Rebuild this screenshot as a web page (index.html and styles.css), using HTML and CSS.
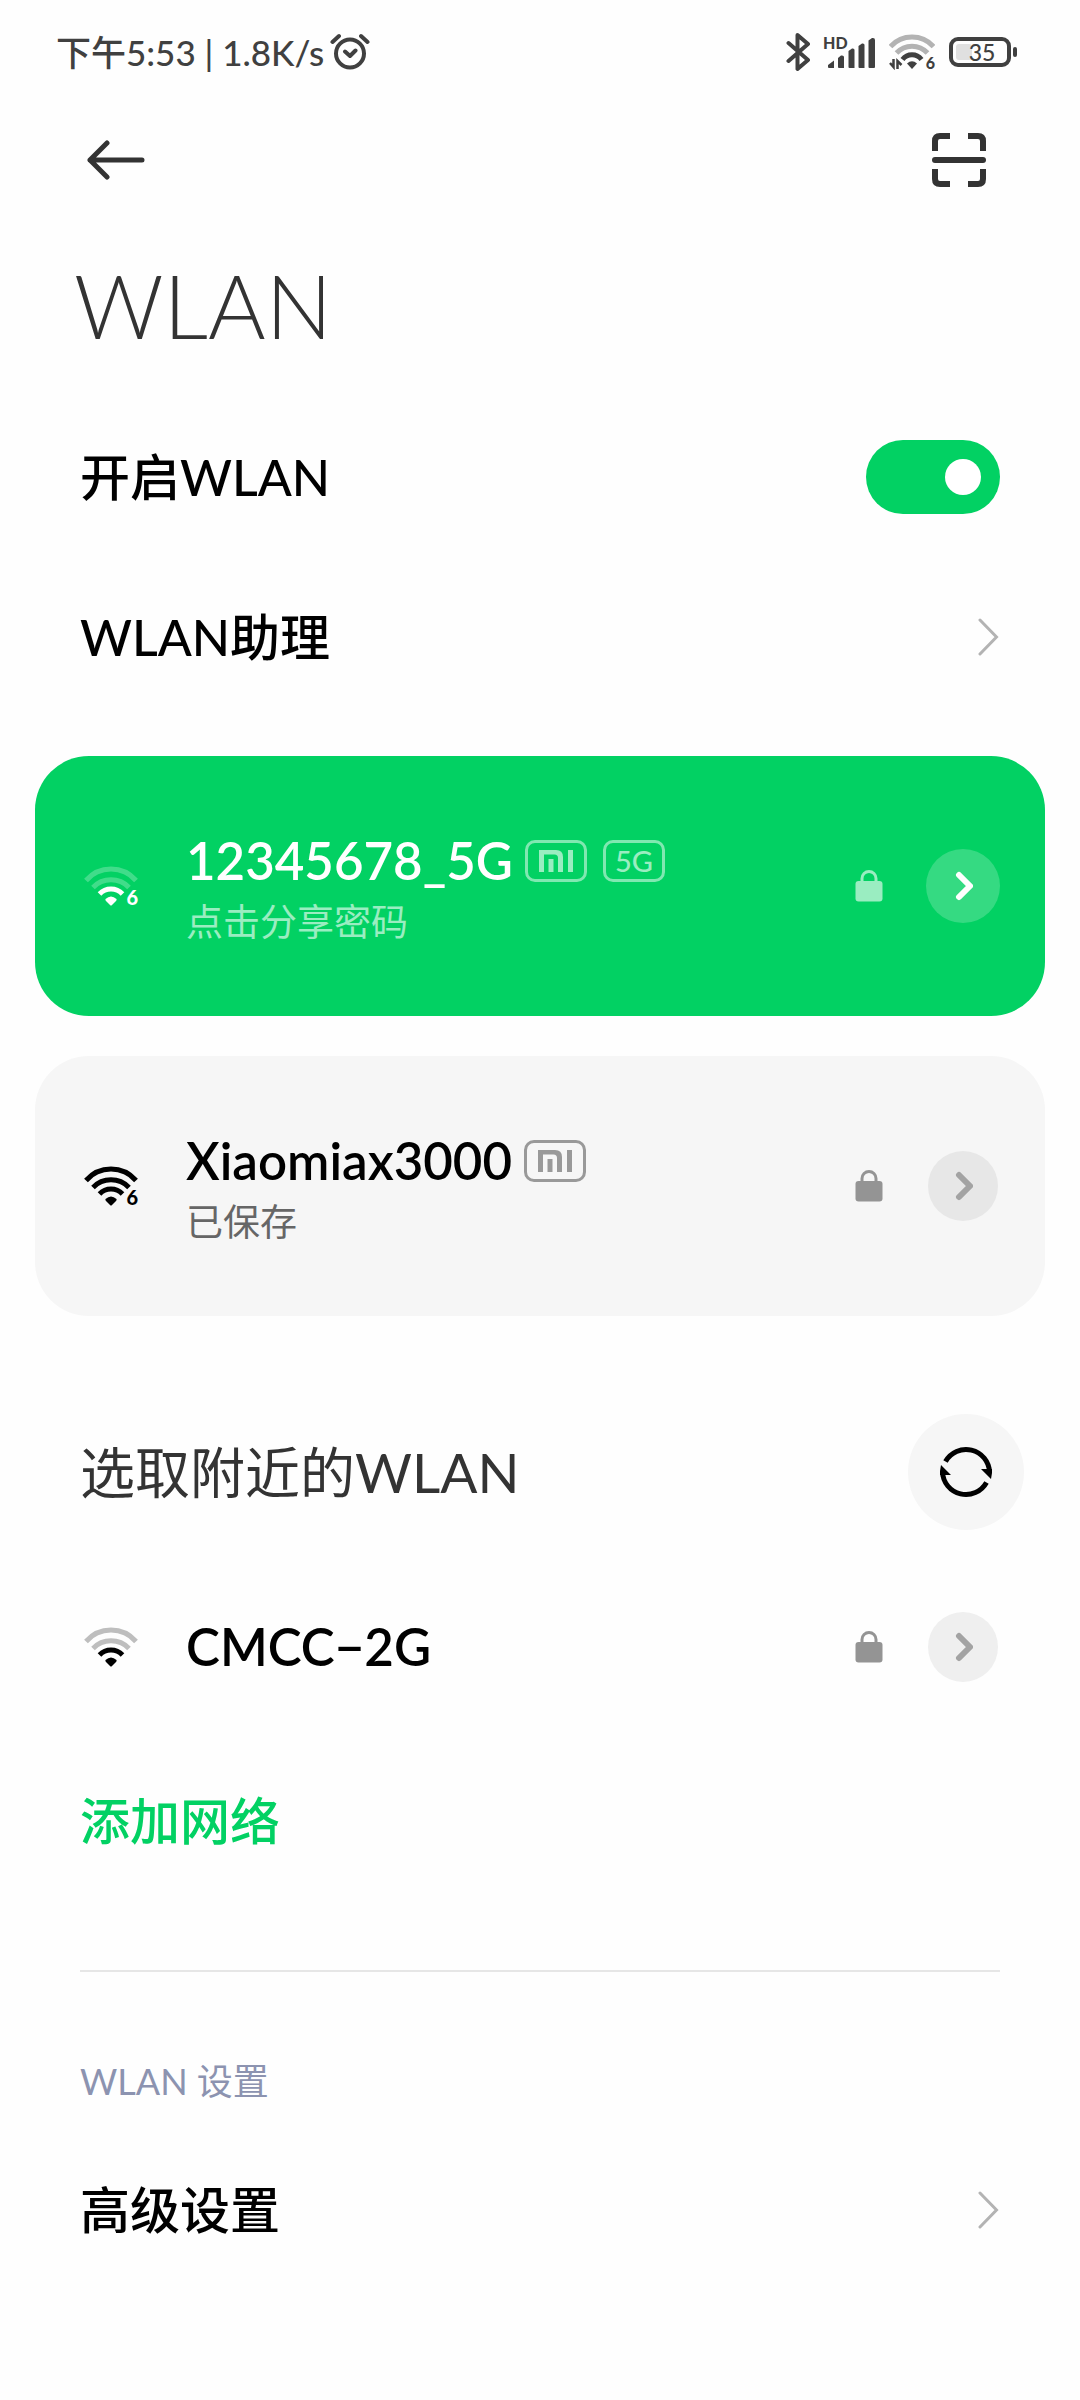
FILE: index.html
```html
<!DOCTYPE html>
<html lang="zh-CN">
<head>
    <meta charset="UTF-8">
    <meta name="viewport" content="width=device-width, initial-scale=1.0">
    <title>WLAN</title>
    <link rel="stylesheet" href="styles.css">
</head>
<body>
    <!-- 共用图标 -->
    <svg class="sprite" aria-hidden="true">
        <symbol id="icon-wifi" viewBox="0 0 54 40">
            <g fill="none" stroke="currentColor" stroke-width="5">
                <path class="wifi-far" d="M2 14.5A33 33 0 0 1 52 14.5"/>
                <path class="wifi-mid" d="M9 21.5A25 25 0 0 1 45 21.5"/>
                <path d="M15.500 28A16 16 0 0 1 38.500 28"/>
            </g>
            <path fill="currentColor" d="M21.500 33Q27 28 32.500 33Q33 34 32 35L28 39Q27 40 26 39L22 35Q21 34 21.500 33Z"/>
        </symbol>
        <symbol id="icon-lock" viewBox="0 0 28 32">
            <path fill="none" stroke="currentColor" stroke-width="3" d="M7 12V8.500a7 7 0 0 1 14 0V12"/>
            <rect fill="currentColor" x="0.500" y="11" width="27" height="20.500" rx="3"/>
        </symbol>
        <symbol id="icon-go" viewBox="0 0 20 30">
            <path fill="none" stroke="currentColor" stroke-width="6" stroke-linecap="round" stroke-linejoin="round" d="M6 4L17 15L6 26"/>
        </symbol>
        <symbol id="icon-chevron" viewBox="0 0 22 40">
            <path fill="none" stroke="currentColor" stroke-width="3" stroke-linecap="round" d="M2 3L18.500 20L2 37"/>
        </symbol>
        <symbol id="icon-mi" viewBox="0 0 34 22">
            <path fill="currentColor" d="M0 0H17Q24 0 24 7V22H19V8Q19 4.500 15.500 4.500H5V22H0Z"/>
            <rect fill="currentColor" x="9.500" y="9" width="5" height="13"/>
            <rect fill="currentColor" x="29" y="0" width="5" height="22"/>
        </symbol>
    </svg>

    <div class="status-bar">
        <div class="status-left">
            <span>下午5:53 | 1.8K/s</span>
            <svg class="alarm" viewBox="0 0 40 38" fill="none" stroke="currentColor" stroke-width="4" stroke-linecap="round" stroke-linejoin="round">
                <circle cx="20" cy="20.500" r="14"/>
                <path d="M15 18.500L20 23L25.500 17.500M2.500 9L9 3M37.500 9L31 3"/>
            </svg>
        </div>
        <div class="status-right">
            <svg class="bluetooth" viewBox="0 0 25 40" fill="none" stroke="currentColor" stroke-width="4" stroke-linecap="round" stroke-linejoin="round">
                <path d="M2.500 11L22 28L11.500 37V3L22 12L2.500 29"/>
            </svg>
            <div class="signal">
                <svg viewBox="0 0 50 34" fill="currentColor">
                    <path d="M3 30L9 25.500V33H4Q3 33 3 32Z"/>
                    <path d="M13 23L16 20.500Q19 20 19 22V33H14Q13 33 13 32Z"/>
                    <path d="M23.500 16L27 13.500Q29.500 13 29.500 15V33H24.500Q23.500 33 23.500 32Z"/>
                    <path d="M33.500 11L37 8.500Q39.500 8 39.500 10V33H34.500Q33.500 33 33.500 32Z"/>
                    <path d="M43.500 5.500L47 3Q50 2.500 50 5V32Q50 33 49 33H44.500Q43.500 33 43.500 32Z"/>
                </svg>
                <span class="signal-hd">HD</span>
            </div>
            <div class="status-wifi">
                <svg viewBox="0 0 46 36">
                    <g fill="none" stroke-width="5">
                        <path stroke="#b3b3b3" d="M1.500 12.500A29 29 0 0 1 44.500 12.500"/>
                        <path stroke="#b3b3b3" d="M7.500 19A21 21 0 0 1 38.500 19"/>
                        <path stroke="currentColor" d="M13.500 25.500A12 12 0 0 1 32.500 25.500"/>
                    </g>
                    <path fill="currentColor" d="M18 29.500Q23 25 28 29.500L23 35Z"/>
                    <path fill="none" stroke="currentColor" stroke-width="2.500" d="M1 29L4.500 33V25M8.500 35V27L12.500 31"/>
                </svg>
                <span class="wifi-gen">6</span>
            </div>
            <div class="battery">
                <span class="battery-level"></span>
                <span class="battery-text">35</span>
            </div>
        </div>
    </div>

    <header class="nav">
        <button class="icon-button" aria-label="返回">
            <svg class="back-icon" viewBox="0 0 58 40" fill="none" stroke="currentColor" stroke-width="5" stroke-linecap="round" stroke-linejoin="round">
                <path d="M55 20H3M20 3L3 20L20 37"/>
            </svg>
        </button>
        <button class="icon-button" aria-label="扫一扫">
            <svg class="scan-icon" viewBox="0 0 54 54" fill="none" stroke="currentColor" stroke-width="6">
                <path d="M3 18V8Q3 3 8 3H18M36 3H46Q51 3 51 8V18M51 36V46Q51 51 46 51H36M18 51H8Q3 51 3 46V36"/>
                <path stroke-linecap="round" d="M3 27H51"/>
            </svg>
        </button>
    </header>

    <main>
        <h1 class="title">WLAN</h1>

        <div class="row">
            <label for="wlan-switch">开启WLAN</label>
            <input class="switch" type="checkbox" id="wlan-switch" checked>
        </div>
        <a class="row" href="#">
            <span>WLAN助理</span>
            <svg class="chevron"><use href="#icon-chevron"/></svg>
        </a>

        <section class="cards">
            <div class="network card connected">
                <div class="wifi-icon weak">
                    <svg><use href="#icon-wifi"/></svg>
                    <span class="wifi-gen">6</span>
                </div>
                <div class="network-text">
                    <div class="network-name">
                        <span>12345678_5G</span>
                        <span class="badges">
                            <span class="badge"><svg><use href="#icon-mi"/></svg></span>
                            <span class="badge">5G</span>
                        </span>
                    </div>
                    <div class="network-note">点击分享密码</div>
                </div>
                <svg class="lock"><use href="#icon-lock"/></svg>
                <button class="go" aria-label="12345678_5G 详情"><svg><use href="#icon-go"/></svg></button>
            </div>

            <div class="network card saved">
                <div class="wifi-icon">
                    <svg><use href="#icon-wifi"/></svg>
                    <span class="wifi-gen">6</span>
                </div>
                <div class="network-text">
                    <div class="network-name">
                        <span>Xiaomiax3000</span>
                        <span class="badges">
                            <span class="badge"><svg><use href="#icon-mi"/></svg></span>
                        </span>
                    </div>
                    <div class="network-note">已保存</div>
                </div>
                <svg class="lock"><use href="#icon-lock"/></svg>
                <button class="go" aria-label="Xiaomiax3000 详情"><svg><use href="#icon-go"/></svg></button>
            </div>
        </section>

        <section>
            <div class="section-head">
                <h2>选取附近的WLAN</h2>
                <button class="refresh" aria-label="刷新">
                    <svg viewBox="0 0 54 54">
                        <g fill="none" stroke="currentColor" stroke-width="5">
                            <path d="M6.500 16.500A23.500 23.500 0 0 1 50.500 27"/>
                            <path d="M47.500 37.500A23.500 23.500 0 0 1 3.500 27"/>
                        </g>
                        <path fill="currentColor" d="M42 24H53V28L52 34ZM12 30H1V26L2 20Z"/>
                    </svg>
                </button>
            </div>
            <div class="network nearby">
                <div class="wifi-icon weak">
                    <svg><use href="#icon-wifi"/></svg>
                </div>
                <div class="network-text">
                    <div class="network-name">CMCC−2G</div>
                </div>
                <svg class="lock"><use href="#icon-lock"/></svg>
                <button class="go" aria-label="CMCC-2G 详情"><svg><use href="#icon-go"/></svg></button>
            </div>
            <a class="row add-network" href="#">添加网络</a>
        </section>

        <section class="settings">
            <h3>WLAN 设置</h3>
            <a class="row" href="#">
                <span>高级设置</span>
                <svg class="chevron"><use href="#icon-chevron"/></svg>
            </a>
        </section>
    </main>
</body>
</html>
```
FILE: styles.css
```css
* {
    box-sizing: border-box;
}
body {
    margin: 0;
    background-color: #fefefe;
    color: #000;
    font-family: Lato, "Noto Sans CJK SC", sans-serif;
    font-size: 50px;
    font-weight: 500;
    line-height: 60px;
}
a {
    color: inherit;
    text-decoration: none;
}
button {
    border: none;
    padding: 0;
    background: none;
    color: inherit;
    cursor: pointer;
}
svg {
    display: block;
    flex-shrink: 0;
}
h1, h2, h3 {
    margin: 0;
}
.sprite {
    position: absolute;
    width: 0;
    height: 0;
}

/* 状态栏 */
.status-bar {
    display: flex;
    justify-content: space-between;
    align-items: center;
    height: 104px;
    padding: 0 63px 0 56px;
    color: #404040;
    font-size: 35px;
}
.status-left {
    display: flex;
    align-items: center;
    gap: 6px;
}
.status-right {
    display: flex;
    align-items: center;
    gap: 14px;
}
.alarm {
    width: 40px;
    height: 38px;
}
.bluetooth {
    width: 25px;
    height: 40px;
}
.signal {
    position: relative;
}
.signal svg {
    width: 50px;
    height: 34px;
}
.signal-hd {
    position: absolute;
    left: -2px;
    top: -2px;
    font-size: 16px;
    font-weight: 900;
    line-height: 20px;
}
.status-wifi {
    position: relative;
}
.status-wifi svg {
    width: 46px;
    height: 36px;
}
.battery {
    position: relative;
    display: flex;
    align-items: center;
    justify-content: center;
    width: 62px;
    height: 30px;
    margin-right: 6px;
    border: 4px solid #404040;
    border-radius: 9px;
    font-size: 23px;
    line-height: 22px;
}
.battery::after {
    content: "";
    position: absolute;
    right: -10px;
    top: 6px;
    width: 4px;
    height: 10px;
    border-radius: 2px;
    background-color: #404040;
}
.battery-level {
    position: absolute;
    left: 3px;
    top: 3px;
    width: 16px;
    height: 16px;
    border-radius: 3px;
    background-color: #e0e0e0;
}
.battery-text {
    position: relative;
    padding-left: 4px;
}

/* 顶部导航 */
.nav {
    display: flex;
    justify-content: space-between;
    align-items: center;
    height: 112px;
    padding: 0 94px 0 87px;
    color: #333;
}
.back-icon {
    width: 58px;
    height: 40px;
}
.scan-icon {
    width: 54px;
    height: 54px;
}
.title {
    padding: 39px 74px 42px;
    color: #333;
    font-size: 88px;
    font-weight: 300;
    line-height: 100px;
}

/* 设置行 */
.row {
    display: flex;
    justify-content: space-between;
    align-items: center;
    height: 160px;
    padding: 0 80px;
}
.switch {
    appearance: none;
    display: flex;
    align-items: center;
    justify-content: flex-end;
    width: 134px;
    height: 74px;
    margin: 0;
    padding: 0 19px;
    border-radius: 37px;
    background-color: #ccc;
    cursor: pointer;
}
.switch::before {
    content: "";
    width: 36px;
    height: 36px;
    border-radius: 50%;
    background-color: #fff;
}
.switch:checked {
    background-color: #02d163;
}
.switch:not(:checked) {
    justify-content: flex-start;
}
.chevron {
    width: 22px;
    height: 40px;
    color: #b3b3b3;
}

/* 网络列表 */
.cards {
    display: flex;
    flex-direction: column;
    gap: 40px;
    padding: 39px 35px 0;
}
.network {
    display: flex;
    align-items: center;
}
.card {
    height: 260px;
    padding: 0 45px 0 49px;
    border-radius: 54px;
}
.connected {
    background-color: #02d163;
    color: #fff;
}
.saved {
    background-color: #f6f6f6;
}
.nearby {
    height: 174px;
    padding: 0 80px 0 84px;
}
.wifi-icon {
    position: relative;
    width: 54px;
    margin-right: 48px;
}
.wifi-icon svg {
    width: 54px;
    height: 40px;
}
.wifi-gen {
    position: absolute;
    right: 0;
    bottom: 0;
    font-size: 20px;
    font-weight: 900;
    line-height: 18px;
}
.status-wifi .wifi-gen {
    font-size: 16px;
    line-height: 14px;
}
.weak {
    --far-opacity: 0.25;
}
.wifi-far,
.wifi-mid {
    opacity: var(--far-opacity, 1);
}
.network-text {
    flex: 1;
}
.network-name {
    display: flex;
    align-items: center;
    gap: 12px;
    font-size: 51px;
    font-weight: 600;
    line-height: 72px;
}
.network-note {
    color: #666;
    font-size: 37px;
    font-weight: 400;
    line-height: 50px;
}
.badges {
    display: flex;
    gap: 16px;
}
.badge {
    display: flex;
    align-items: center;
    justify-content: center;
    width: 62px;
    height: 42px;
    border: 3px solid #999;
    border-radius: 10px;
    color: #999;
    font-size: 29px;
    font-weight: 500;
    line-height: 36px;
}
.badge svg {
    width: 34px;
    height: 22px;
}
.lock {
    width: 28px;
    height: 32px;
    color: #949494;
}
.go {
    display: flex;
    align-items: center;
    justify-content: center;
    width: 70px;
    height: 70px;
    margin: 0 2px 0 45px;
    border-radius: 50%;
    background-color: #e7e7e7;
    color: #a3a3a3;
}
.go svg {
    width: 20px;
    height: 30px;
}
.nearby .go {
    background-color: #efefef;
}
.connected .network-note {
    color: #9aedc1;
}
.connected .badge {
    border-color: #80e8b1;
    color: #9aedc1;
}
.connected .lock {
    color: #9aedc1;
}
.connected .go {
    width: 74px;
    height: 74px;
    margin: 0 0 0 43px;
    background-color: #35da82;
    color: #fff;
}

/* 附近的网络 */
.section-head {
    display: flex;
    justify-content: space-between;
    align-items: center;
    margin-top: 68px;
    padding: 30px 56px 30px 80px;
}
.section-head h2 {
    color: #333;
    font-size: 55px;
    font-weight: 400;
}
.refresh {
    display: flex;
    align-items: center;
    justify-content: center;
    width: 116px;
    height: 116px;
    border-radius: 50%;
    background-color: #f6f6f6;
    color: #000;
}
.refresh svg {
    width: 54px;
    height: 54px;
}
.add-network {
    height: 174px;
    color: #02d163;
}

/* WLAN 设置 */
.settings {
    margin-top: 62px;
}
.settings::before {
    content: "";
    display: block;
    height: 2px;
    margin: 0 80px;
    background-color: #e6e6e6;
}
.settings h3 {
    padding: 84px 80px 24px;
    color: #8c93b0;
    font-size: 36px;
    font-weight: 400;
    line-height: 50px;
}
```
